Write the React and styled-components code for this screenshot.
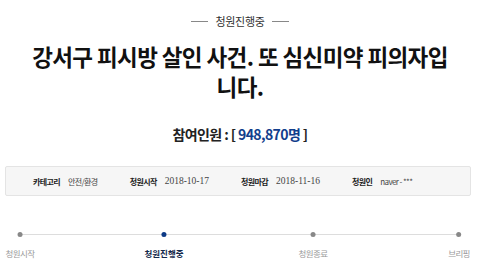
import React from "react";
import styled, { createGlobalStyle } from "styled-components";

const Global = createGlobalStyle`
  html, body { margin: 0; padding: 0; background: #fff; }
  body { font-family: "Noto Sans CJK KR", "Noto Sans", sans-serif; color: #222; }
`;

const Page = styled.div`
  width: 480px;
  height: 270px;
  overflow: hidden;
  display: flex;
  flex-direction: column;
  align-items: center;
`;

const Status = styled.div`
  margin-top: 11px;
  display: flex;
  align-items: center;
  gap: 7px;
  font-size: 11px;
  line-height: 20px;
  letter-spacing: -0.3px;
  color: #333;
`;

const Dash = styled.span`
  width: 17px;
  height: 1px;
  background: #888;
`;

const Title = styled.h1`
  margin: 10px 0 0;
  width: 425px;
  text-align: center;
  font-size: 22.5px;
  font-weight: 700;
  line-height: 30px;
  letter-spacing: -0.6px;
  color: #111;
`;

const Count = styled.div`
  margin-top: 23px;
  font-size: 14px;
  font-weight: 700;
  line-height: 20px;
  color: #222;
  letter-spacing: -0.6px;
`;

const Num = styled.span`
  color: #123e8c;
`;

const InfoBox = styled.div`
  margin-top: 22px;
  align-self: flex-start;
  margin-left: 5px;
  width: 466px;
  height: 30px;
  box-sizing: border-box;
  background: #f6f6f6;
  border: 1px solid #e4e4e4;
  border-radius: 2px;
  display: flex;
  align-items: center;
  padding-left: 27px;
  gap: 32px;
`;

const InfoItem = styled.div`
  display: flex;
  align-items: center;
  gap: 8px;
`;

const Label = styled.span`
  font-size: 8px;
  font-weight: 700;
  letter-spacing: -0.6px;
  color: #222;
`;

const Value = styled.span`
  font-family: ${(p) => (p.$serif ? '"Liberation Serif", serif' : 'inherit')};
  font-size: ${(p) => (p.$serif ? "9.5px" : "8px")};
  letter-spacing: ${(p) => (p.$serif ? "0" : "-0.6px")};
  color: #444;
`;

const Steps = styled.div`
  margin-top: 32px;
  width: 480px;
  position: relative;
  height: 40px;
`;

const Track = styled.div`
  position: absolute;
  left: 20px;
  right: 21px;
  top: 6px;
  height: 1px;
  background: #ddd;
`;

const Step = styled.div`
  position: absolute;
  top: 0;
  left: ${(p) => p.$x}px;
  transform: translateX(-50%);
  display: flex;
  flex-direction: column;
  align-items: center;
  gap: 9px;
`;

const Dot = styled.span`
  width: 5px;
  height: 5px;
  margin-top: 4px;
  border-radius: 50%;
  background: ${(p) => (p.$active ? "#0d3a86" : "#888")};
`;

const StepLabel = styled.span`
  font-size: 8.5px;
  line-height: 14px;
  white-space: nowrap;
  letter-spacing: ${(p) => (p.$active ? "0" : "-0.6px")};
  color: ${(p) => (p.$active ? "#14284b" : "#999")};
  font-weight: ${(p) => (p.$active ? 700 : 400)};
`;

const steps = [
  { x: 20, label: "청원시작" },
  { x: 164, label: "청원진행중", active: true },
  { x: 313, label: "청원종료" },
  { x: 459, label: "브리핑" },
];

export default function App() {
  return (
    <Page>
      <Global />
      <Status>
        <Dash />
        청원진행중
        <Dash />
      </Status>
      <Title>강서구 피시방 살인 사건. 또 심신미약 피의자입니다.</Title>
      <Count>
        참여인원 : [ <Num>948,870명</Num> ]
      </Count>
      <InfoBox>
        <InfoItem>
          <Label>카테고리</Label>
          <Value>안전/환경</Value>
        </InfoItem>
        <InfoItem>
          <Label>청원시작</Label>
          <Value $serif>2018-10-17</Value>
        </InfoItem>
        <InfoItem>
          <Label>청원마감</Label>
          <Value $serif>2018-11-16</Value>
        </InfoItem>
        <InfoItem>
          <Label>청원인</Label>
          <Value>naver - ***</Value>
        </InfoItem>
      </InfoBox>
      <Steps>
        <Track />
        {steps.map((s) => (
          <Step key={s.label} $x={s.x}>
            <Dot $active={s.active} />
            <StepLabel $active={s.active}>{s.label}</StepLabel>
          </Step>
        ))}
      </Steps>
    </Page>
  );
}
